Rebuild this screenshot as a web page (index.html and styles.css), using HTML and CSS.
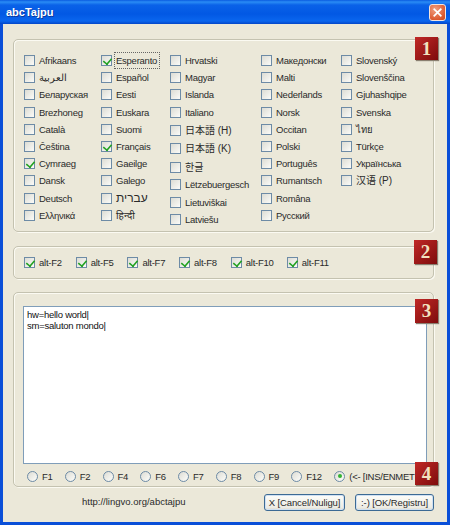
FILE: index.html
```html
<!DOCTYPE html>
<html lang="en">
<head>
<meta charset="utf-8">
<title>abcTajpu</title>
<link rel="stylesheet" href="styles.css">
</head>
<body>
<div class="window">
  <header class="titlebar">
    <span class="title">abcTajpu</span>
    <button class="close" aria-label="Close">
      <svg viewBox="0 0 21 21" width="21" height="21"><path d="M6 6l9 9M15 6l-9 9" stroke="#fff" stroke-width="2.4" stroke-linecap="square"/></svg>
    </button>
  </header>
  <main class="client">
    <section class="group langs">
      <div class="col c1">
        <label class="chk"><i class="box"></i>Afrikaans</label>
        <label class="chk"><i class="box"></i><span class="ar">العربية</span></label>
        <label class="chk"><i class="box"></i>Беларуская</label>
        <label class="chk"><i class="box"></i>Brezhoneg</label>
        <label class="chk"><i class="box"></i>Català</label>
        <label class="chk"><i class="box"></i>Čeština</label>
        <label class="chk"><i class="box on"></i>Cymraeg</label>
        <label class="chk"><i class="box"></i>Dansk</label>
        <label class="chk"><i class="box"></i>Deutsch</label>
        <label class="chk"><i class="box"></i>Ελληνικά</label>
      </div>
      <div class="col c2">
        <label class="chk focus"><i class="box on"></i><span>Esperanto</span></label>
        <label class="chk"><i class="box"></i>Español</label>
        <label class="chk"><i class="box"></i>Eesti</label>
        <label class="chk"><i class="box"></i>Euskara</label>
        <label class="chk"><i class="box"></i>Suomi</label>
        <label class="chk"><i class="box on"></i>Français</label>
        <label class="chk"><i class="box"></i>Gaeilge</label>
        <label class="chk"><i class="box"></i>Galego</label>
        <label class="chk"><i class="box"></i><span class="he">עברית</span></label>
        <label class="chk"><i class="box"></i><span class="hi">हिन्दी</span></label>
      </div>
      <div class="col c3">
        <label class="chk"><i class="box"></i>Hrvatski</label>
        <label class="chk"><i class="box"></i>Magyar</label>
        <label class="chk"><i class="box"></i>Islanda</label>
        <label class="chk"><i class="box"></i>Italiano</label>
        <label class="chk tall"><i class="box"></i><span class="cjk">日本語 (H)</span></label>
        <label class="chk tall"><i class="box"></i><span class="cjk">日本語 (K)</span></label>
        <label class="chk tall"><i class="box"></i><span class="cjk">한글</span></label>
        <label class="chk"><i class="box"></i>Lëtzebuergesch</label>
        <label class="chk"><i class="box"></i>Lietuviškai</label>
        <label class="chk"><i class="box"></i>Latviešu</label>
      </div>
      <div class="col c4">
        <label class="chk"><i class="box"></i>Македонски</label>
        <label class="chk"><i class="box"></i>Malti</label>
        <label class="chk"><i class="box"></i>Nederlands</label>
        <label class="chk"><i class="box"></i>Norsk</label>
        <label class="chk"><i class="box"></i>Occitan</label>
        <label class="chk"><i class="box"></i>Polski</label>
        <label class="chk"><i class="box"></i>Português</label>
        <label class="chk"><i class="box"></i>Rumantsch</label>
        <label class="chk"><i class="box"></i>Româna</label>
        <label class="chk"><i class="box"></i>Русский</label>
      </div>
      <div class="col c5">
        <label class="chk"><i class="box"></i>Slovenský</label>
        <label class="chk"><i class="box"></i>Slovenščina</label>
        <label class="chk"><i class="box"></i>Gjuhashqipe</label>
        <label class="chk"><i class="box"></i>Svenska</label>
        <label class="chk"><i class="box"></i>ไทย</label>
        <label class="chk"><i class="box"></i>Türkçe</label>
        <label class="chk"><i class="box"></i>Українська</label>
        <label class="chk"><i class="box"></i><span class="cjk">汉语 (P)</span></label>
      </div>
      <b class="badge b1">1</b>
    </section>
    <section class="group alts">
      <label class="chk"><i class="box on"></i>alt-F2</label>
      <label class="chk"><i class="box on"></i>alt-F5</label>
      <label class="chk"><i class="box on"></i>alt-F7</label>
      <label class="chk"><i class="box on"></i>alt-F8</label>
      <label class="chk wide"><i class="box on"></i>alt-F10</label>
      <label class="chk"><i class="box on"></i>alt-F11</label>
      <b class="badge b2">2</b>
    </section>
    <section class="group editor">
      <div class="text">hw=hello world|<br>sm=saluton mondo|</div>
      <div class="radios">
        <label class="rad"><i class="dot"></i>F1</label>
        <label class="rad"><i class="dot"></i>F2</label>
        <label class="rad"><i class="dot"></i>F4</label>
        <label class="rad"><i class="dot"></i>F6</label>
        <label class="rad"><i class="dot"></i>F7</label>
        <label class="rad"><i class="dot"></i>F8</label>
        <label class="rad"><i class="dot"></i>F9</label>
        <label class="rad f12"><i class="dot"></i>F12</label>
        <label class="rad last"><i class="dot on"></i>(&lt;- [INS/ENMETU</label>
      </div>
      <b class="badge b3">3</b>
      <b class="badge b4">4</b>
    </section>
    <footer class="foot">
      <span class="url">http://lingvo.org/abctajpu</span>
      <button class="btn cancel">X [Cancel/Nuligu]</button>
      <button class="btn ok">:-) [OK/Registru]</button>
    </footer>
  </main>
</div>
</body>
</html>
```
FILE: styles.css
```css
* { box-sizing: border-box; }
html, body { margin: 0; padding: 0; }
body { width: 450px; height: 525px; overflow: hidden; font: 9.5px/13px "Liberation Sans", "Noto Sans", "Noto Sans CJK JP", sans-serif; letter-spacing: -.25px; color: #2a2a2a; }
.window { width: 450px; height: 525px; background: #0a4fd8; padding: 0 3px 3px; display: flex; flex-direction: column; }
.titlebar { height: 24px; margin: 0 -3px; padding: 0 4px 0 6px; display: flex; align-items: center; justify-content: space-between; background: linear-gradient(#0a5be0 0, #2a8cf5 2px, #0a62e8 5px, #0258e4 14px, #0a66ee 21px, #0346c8 24px); }
.title { color: #fff; font: bold 11px "Liberation Sans", sans-serif; letter-spacing: 0; text-shadow: 1px 1px 0 #0a3aa0; }
.close { width: 17px; height: 17px; margin: 0; padding: 0; border: 1px solid #f4e4dc; border-radius: 3px; background: radial-gradient(circle at 35% 30%, #f0a080, #dc5a30 70%, #c8481c); display: flex; align-items: center; justify-content: center; overflow: hidden; }
.close svg { flex: none; width: 15px; height: 15px; }
.client { flex: 1; background: #ebe8d9; padding: 15px 13px 0 10px; display: flex; flex-direction: column; }
.group { position: relative; border: 1px solid #c4c2b0; border-radius: 5px; box-shadow: 1px 1px 0 #fbfaf2 inset, 1px 1px 0 #fbfaf2; }
.langs { height: 193px; display: flex; padding: 12px 0 0 10px; }
.col { display: flex; flex-direction: column; }
.c1 { width: 77px; }
.c2 { width: 69px; }
.c3 { width: 91px; }
.c4 { width: 80px; }
.chk { display: flex; align-items: center; height: 17.2px; white-space: nowrap; }
.tall { height: 18.5px; }
.box { flex: none; width: 11px; height: 11px; margin-right: 4px; border: 1px solid #6d8ba6; background: linear-gradient(135deg, #dcdcd4, #fbfbf8); position: relative; }
.box.on::after { content: ""; position: absolute; left: 2px; top: 0; width: 5px; height: 8px; transform: translateY(-.5px) rotate(40deg) scale(.8); border: solid #21a121; border-width: 0 2px 2px 0; }
.focus span { outline: 1px dotted #666; outline-offset: 1px; padding-right: 1px; }
.cjk { font-size: 10px; letter-spacing: 0; }
.ar { font-size: 10px; letter-spacing: 0; }
.he { font-size: 12px; letter-spacing: 0; }
.hi { font-size: 10px; letter-spacing: 0; }
.alts { height: 33px; margin-top: 14px; display: flex; align-items: center; padding: 0 0 0 10px; }
.alts .chk { width: 51.7px; }
.alts .wide { width: 56px; }
.editor { height: 195px; margin-top: 13px; padding: 13px 6px 0 9px; }
.text { height: 158px; background: #fff; border: 1px solid #7f9db9; padding: 2px 3px; line-height: 11px; color: #111; }
.radios { display: flex; padding-left: 4px; margin-top: 5px; height: 14px; align-items: center; }
.rad { display: flex; align-items: center; width: 37.75px; white-space: nowrap; }
.f12 { width: 43px; }
.last { width: 81px; flex: none; }
.dot { flex: none; width: 11px; height: 11px; margin-right: 4px; border-radius: 50%; border: 1px solid #6d8ba6; background: linear-gradient(135deg, #dcdcd4, #fdfdfa); position: relative; }
.dot.on::after { content: ""; position: absolute; left: 2.5px; top: 2.5px; width: 4px; height: 4px; border-radius: 50%; background: #32b232; }
.badge { position: absolute; width: 23px; height: 23px; display: flex; align-items: center; justify-content: center; font: bold 19px "Liberation Serif", serif; letter-spacing: 0; color: #f2e2c0; background: linear-gradient(135deg, #c02826, #7e0c0c); box-shadow: 1px 1px 1px #8a7f70; }
.b1 { right: -5px; top: -3px; }
.b2 { right: -4px; top: -7px; height: 24px; }
.b3 { right: -5px; top: 6px; height: 24px; }
.b4 { right: -5px; bottom: 1px; }
.foot { position: relative; display: flex; align-items: flex-start; padding-top: 7px; }
.url { width: 251px; margin-top: 1px; padding-left: 69px; white-space: nowrap; letter-spacing: 0; }
.btn { height: 17px; padding: 0; border: 1px solid #3c6a94; border-radius: 3px; background: linear-gradient(#fdfdfa, #ecebe3 85%, #d8d5c6); font: 9.5px "Liberation Sans", sans-serif; letter-spacing: -.1px; color: #2a2a2a; white-space: nowrap; box-shadow: inset 0 0 0 1px #cfe0f2; }
.cancel { width: 81px; margin-right: 10px; }
.ok { width: 79px; }
```
